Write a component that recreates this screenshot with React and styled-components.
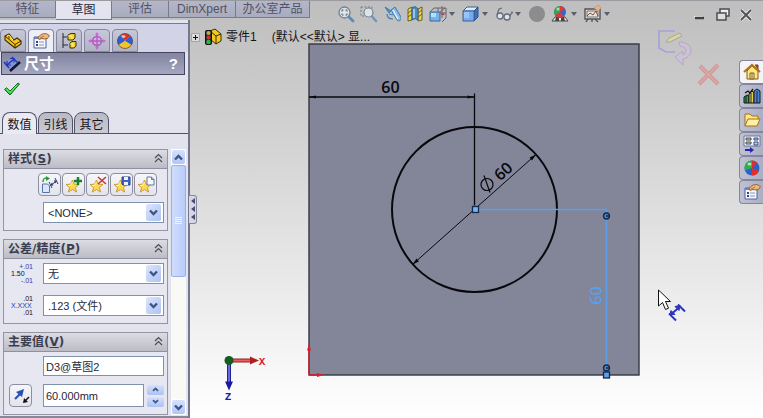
import React, { useState } from "react";
import styled, { createGlobalStyle } from "styled-components";

const GlobalStyle = createGlobalStyle`
  * {
    box-sizing: border-box;
  }

  body {
    margin: 0;
    font-family: "Liberation Sans", "Noto Sans CJK SC", sans-serif;
    font-size: 12px;
    color: #26283a;
  }

  button,
  input,
  select {
    font-family: inherit;
    font-size: inherit;
    color: inherit;
    margin: 0;
  }
`;

const Shell = styled.div`
  min-height: 100vh;
  display: flex;
  flex-direction: column;
  background: linear-gradient(#bebebe 0%, #cdcdcd 25%, #dedede 50%, #eeeeee 74%, #ffffff 100%);
`;

const Header = styled.header`
  height: 20px;
  display: flex;
  align-items: flex-start;
  border-top: 1px solid #9a9aa0;
  position: relative;
  z-index: 1;
`;

const CommandTabs = styled.nav`
  display: flex;
  align-items: flex-start;
`;

const CommandTab = styled.button`
  height: ${(props) => (props.$active ? "19px" : "17px")};
  padding: 0;
  width: ${(props) => props.$width};
  border: 1px solid #777a90;
  border-width: 0 1px 1px 0;
  background: ${(props) => (props.$active ? "#e3e4ef" : "linear-gradient(#b4b7c8, #a9acbf)")};
  color: ${(props) => (props.$active ? "#26283a" : "#505367")};
  line-height: 16px;
`;

const ViewTools = styled.div`
  display: flex;
  gap: 5px;
  padding-top: 4px;
  margin-left: 27px;
`;

const ToolButton = styled.button`
  display: flex;
  align-items: center;
  gap: 2px;
  width: ${(props) => (props.$menu ? "28px" : "18px")};
  height: 18px;
  padding: 0;
  border: 0;
  background: none;
`;

const WindowButtons = styled.div`
  display: flex;
  gap: 5px;
  padding: 5px 8px 0 0;
  margin-left: auto;
`;

const Body = styled.div`
  flex: 1;
  display: flex;
`;

const Panel = styled.aside`
  flex: 0 0 190px;
  display: flex;
  flex-direction: column;
  background: #e2e3ed;
  border-right: 2px solid #74778d;
  border-bottom: 3px solid #85889c;
`;

const ManagerTabs = styled.div`
  display: flex;
  gap: 2px;
  height: 29px;
  padding-top: 5px;
  margin-top: 3px;
  border-top: 1px solid #777a92;
  background: #d2d3e7;
`;

const ManagerTab = styled.button`
  display: flex;
  align-items: center;
  justify-content: center;
  width: 26px;
  padding: 0;
  border: 1px solid #8587a0;
  border-bottom-width: ${(props) => (props.$active ? "0" : "1px")};
  border-radius: 4px 4px 0 0;
  background: ${(props) => (props.$active ? "#eeeff6" : "linear-gradient(#c6c8d8, #b2b4c6)")};
`;

const TitleBar = styled.div`
  display: flex;
  align-items: center;
  gap: 3px;
  height: 23px;
  margin: 0 3px 0 1px;
  padding: 0 6px 0 1px;
  border: 1px solid #45475e;
  background: linear-gradient(#8284a0, #a5a7c0);
`;

const Title = styled.h1`
  flex: 1;
  margin: 0;
  color: #fff;
  font-size: 15px;
  line-height: 20px;
`;

const HelpButton = styled.button`
  padding: 0;
  border: 0;
  background: none;
  color: #fff;
  font-size: 15px;
  font-weight: bold;
`;

const ConfirmBar = styled.div`
  height: 37px;
  padding: 5px 3px;
`;

const PlainButton = styled.button`
  display: block;
  padding: 0;
  border: 0;
  background: none;
`;

const PageTabs = styled.div`
  display: flex;
  gap: 1px;
  height: 22px;
  padding-left: 2px;
  margin-bottom: 15px;
  border-bottom: 1px solid #50536a;
`;

const PageTab = styled.button`
  width: 35px;
  height: 22px;
  padding: 0;
  border: 1px solid #50536a;
  border-bottom-width: ${(props) => (props.$active ? "0" : "1px")};
  border-radius: 8px 8px 0 0;
  background: ${(props) => (props.$active ? "#e9eaf2" : "linear-gradient(#b9bac4, #c9cad3)")};
  color: #14151f;
`;

const ScrollArea = styled.div`
  flex: 1;
  display: flex;
  gap: 3px;
  padding: 0 2px 1px 3px;
`;

const Groups = styled.div`
  flex: 1;
  display: flex;
  flex-direction: column;
  gap: 8px;
`;

const Group = styled.section`
  border: 1px solid #9395a6;
  background: #e6e7f0;
`;

const GroupHeader = styled.div`
  display: flex;
  align-items: center;
  justify-content: space-between;
  height: 19px;
  padding: 0 4px;
  border-bottom: 1px solid #8f919f;
  background: linear-gradient(#dcdde3, #bbbcc5);
`;

const GroupTitle = styled.h2`
  margin: 0;
  font-family: "DejaVu Sans", "Noto Sans CJK SC", sans-serif;
  font-size: 12px;
  line-height: 18px;
  color: #3b3e50;
`;

const GroupBody = styled.div`
  display: flex;
  flex-direction: column;
  gap: ${(props) => props.$gap};
  padding: 4px 3px 7px 4px;
`;

const StyleButtons = styled.div`
  display: flex;
  gap: 1px;
  justify-content: flex-end;
  padding-right: 7px;
`;

const BoxButton = styled.button`
  display: flex;
  align-items: center;
  justify-content: center;
  width: 23px;
  height: 23px;
  padding: 0;
  border: 1px solid #8d8fa0;
  border-radius: 4px;
  background: linear-gradient(#f6f6fa, #e3e4ec);
`;

const Row = styled.div`
  display: grid;
  grid-template-columns: 35px 1fr;
  align-items: center;
`;

const Combo = styled.div`
  grid-column: 2;
  display: grid;
  grid-template-columns: 1fr 17px;
  align-items: center;
  height: 21px;
  border: 1px solid #7f92ab;
  background: #fff;
`;

const Select = styled.select`
  grid-area: 1 / 1 / 2 / 3;
  width: 100%;
  height: 19px;
  padding: 0 0 0 4px;
  border: 0;
  appearance: none;
  background: transparent;
  font-size: 11px;
`;

const ComboArrow = styled.span`
  grid-area: 1 / 2;
  display: flex;
  align-items: center;
  justify-content: center;
  width: 15px;
  height: 17px;
  border-radius: 2px;
  background: linear-gradient(135deg, #dbe5fd, #adc3f3);
  pointer-events: none;
`;

const ToleranceLabel = styled.label`
  display: grid;
  width: 22px;
  margin-left: 3px;
  font-size: 7px;
  line-height: 7px;
  color: ${(props) => (props.$blueSides ? "#1c3cae" : "#101018")};
`;

const LabelSide = styled.span`
  text-align: right;
`;

const LabelMain = styled.span`
  color: ${(props) => (props.$blue ? "#1c3cae" : "#101018")};
`;

const TextBox = styled.input`
  grid-column: 2;
  width: 100%;
  min-width: 0;
  height: ${(props) => props.$height || "20px"};
  padding: 0 2px;
  border: 1px solid #7f92ab;
  background: #fff;
  font-size: 11px;
`;

const ValueField = styled.div`
  display: flex;
  align-items: center;
  gap: 3px;
`;

const Spinner = styled.div`
  display: grid;
  gap: 2px;
`;

const SpinButton = styled.button`
  display: flex;
  align-items: center;
  justify-content: center;
  width: 17px;
  height: 10px;
  padding: 0;
  border: 0;
  border-radius: 2px;
  background: linear-gradient(#d5e1fd, #abc2f4);
`;

const SwapCell = styled.div`
  padding-left: 1px;
`;

const ScrollBar = styled.div`
  display: flex;
  flex-direction: column;
  width: 15px;
  background: #f9f9f6;
`;

const ScrollButton = styled.button`
  display: flex;
  align-items: center;
  justify-content: center;
  height: 16px;
  padding: 0;
  border: 1px solid #fff;
  border-radius: 3px;
  background: linear-gradient(#d5e1fd, #b1c6f6);
`;

const Thumb = styled.div`
  display: flex;
  align-items: center;
  justify-content: center;
  height: 42%;
  border: 1px solid #98b0e6;
  border-radius: 2px;
  background: linear-gradient(90deg, #cfdcfd, #b9cdfb);
`;

const Track = styled.div`
  flex: 1;
`;

const Viewport = styled.main`
  flex: 1;
  min-width: 0;
  position: relative;
`;

const Drawing = styled.svg`
  display: block;
  width: 100%;
  height: 100%;
`;

const DimensionText = styled.text`
  font-family: "Open Sans", sans-serif;
  font-size: 16px;
  font-weight: 600;
  text-anchor: middle;
`;

const AxisText = styled.text`
  font-family: "Liberation Mono", monospace;
  font-size: 11px;
  font-weight: bold;
  text-anchor: middle;
`;

const TreeNode = styled.div`
  position: absolute;
  top: 8px;
  left: 1px;
  display: flex;
  align-items: center;
  gap: 4px;
  color: #14151c;
  line-height: 18px;
  white-space: nowrap;
`;

const Configuration = styled.span`
  margin-left: 11px;
`;

const Grip = styled.button`
  position: absolute;
  top: 175px;
  left: -1px;
  width: 8px;
  height: 29px;
  padding: 0;
  border: 1px solid #85879f;
  border-left: 0;
  border-radius: 0 3px 3px 0;
  background: #d5d6e6;
`;

const ConfirmCorner = styled.div`
  position: absolute;
  top: 8px;
  right: 42px;
  display: flex;
  gap: 4px;
  align-items: flex-start;
`;

const CancelSlot = styled.div`
  padding-top: 35px;
`;

const TaskPane = styled.nav`
  position: absolute;
  top: 40px;
  right: 0;
  display: flex;
  flex-direction: column;
`;

const TaskTab = styled.button`
  display: flex;
  align-items: center;
  justify-content: center;
  width: 24px;
  height: 24px;
  padding: 0;
  border: 1px solid #83869c;
  border-right: 0;
  border-radius: 4px 0 0 4px;
  background: ${(props) => (props.$active ? "#f3f3f8" : "linear-gradient(90deg, #c0c2d2, #abaec3)")};
`;

function Icon({ size = 18, children }) {
  return (
    <svg width={size} height={size} viewBox="0 0 18 18" fill="none" aria-hidden="true">
      {children}
    </svg>
  );
}

function Caret() {
  return (
    <svg width="6" height="4" viewBox="0 0 6 4" aria-hidden="true">
      <path d="M0 0h6L3 4z" fill="#5c5d6b" />
    </svg>
  );
}

function Chevron({ up, small }) {
  return (
    <svg width={small ? 7 : 9} height={small ? 5 : 7} viewBox="0 0 9 7" aria-hidden="true">
      <path d={up ? "M1 5.5 4.5 2 8 5.5" : "M1 1.5 4.5 5 8 1.5"} fill="none" stroke="#3e5684" strokeWidth="2.4" />
    </svg>
  );
}

function CollapseIcon() {
  return (
    <svg width="9" height="10" viewBox="0 0 9 10" fill="none" stroke="#4b4d5c" strokeWidth="1.2" aria-hidden="true">
      <path d="M1 5 4.500 1.500 8 5M1 9 4.500 5.500 8 9" />
    </svg>
  );
}

function BallIcon() {
  return (
    <Icon>
      <circle cx="9" cy="9" r="7.500" fill="#2c60cf" />
      <path d="M9 9V1.500A7.500 7.500 0 0 0 2 11.500z" fill="#2fae47" />
      <path d="M9 9V1.500A7.500 7.500 0 0 1 14 3.500z" fill="#e02f28" />
      <path d="M9 9 16 12a7.500 7.500 0 0 1-7 4.500z" fill="#e02f28" />
      <ellipse cx="6.500" cy="5" rx="2" ry="1.500" fill="#fff" opacity=".65" />
    </Icon>
  );
}

function DisplayIcon() {
  return (
    <Icon>
      <path d="M9 9 2.500 13A7.500 7.500 0 0 1 5 2.700z" fill="#2c60cf" />
      <path d="M9 9 5 2.700A7.500 7.500 0 0 1 14.500 4z" fill="#dd2f28" />
      <path d="M9 9 14.500 4A7.500 7.500 0 0 1 15.500 13z" fill="#2c60cf" />
      <path d="M9 9l6.500 4a7.500 7.500 0 0 1-13 0z" fill="#f0c52a" />
      <circle cx="9" cy="9" r="7.500" stroke="#5a4a50" strokeWidth=".8" />
      <ellipse cx="7.500" cy="4.500" rx="2" ry="1.300" fill="#fff" opacity=".7" />
    </Icon>
  );
}

function PartIcon() {
  return (
    <Icon>
      <path d="m1 4 4-2 5 6 3-2 4 3v3l-6 4L1 8z" fill="#f5c518" stroke="#3d2d00" strokeWidth="1.100" />
      <path d="m1 4 10 8.500L17 9M11 12.500v3.500M5 2v4.500" stroke="#3d2d00" />
      <path d="m3 4 2-1 4 5" stroke="#fff19a" />
    </Icon>
  );
}

function PropertyIcon() {
  return (
    <Icon>
      <path d="M2 5h12v11H2z" fill="#f7f8ff" stroke="#5062a0" />
      <path d="M2 5h12v2H2z" fill="#6c83c5" />
      <path d="M4 9h2v2H4zm0 3h2v2H4z" fill="#35477f" />
      <path d="M7 10h5M7 13h5" stroke="#8993b4" />
      <path d="m6 5 4-3 4-.500 3.500 2-2 3L12 7l-2-.500-3 1z" fill="#f0b97a" stroke="#855325" strokeWidth=".8" />
      <path d="m8 6 4-2" stroke="#855325" strokeWidth=".7" />
    </Icon>
  );
}

function TreeIcon() {
  return (
    <Icon>
      <path d="M3 1v15M3 5h4M3 13h5" stroke="#25262f" />
      <path d="m8 3 3-1.500h4V6l-2 2H8z" fill="#f7d321" stroke="#3d3200" />
      <path d="m10 11 2-1.500h4V14l-2 2h-4z" fill="#f7d321" stroke="#3d3200" />
      <path d="M8 4h4v3M10 12h3v3" stroke="#fff9b5" strokeWidth=".8" />
    </Icon>
  );
}

function TargetIcon() {
  return (
    <Icon>
      <circle cx="9" cy="9" r="4.500" stroke="#ba54cc" strokeWidth="1.500" />
      <path d="M9 1v16M1 9h16" stroke="#ba54cc" strokeWidth="1.300" />
      <path d="m9 0 2 3H7zm0 18 2-3H7zM0 9l3-2v4zm18 0-3-2v4z" fill="#c96bd7" />
    </Icon>
  );
}

function DimensionIcon() {
  return (
    <Icon>
      <path d="m1 9 9-7 7 6-9 8z" fill="#8294d8" />
      <path d="m7 16 10-9" stroke="#11162e" strokeWidth="2.600" />
      <path d="m1 7 5 6M9 2l6 6M4 10l7-6" stroke="#2036b1" strokeWidth="1.400" />
      <path d="M4 6v4h4M7 3.500h4v4" stroke="#2036b1" strokeWidth="1.200" />
    </Icon>
  );
}

function CheckIcon() {
  return (
    <Icon>
      <path d="m1.500 9.500 2-1.700L7 11 15 3l1.500 1L7 15z" fill="#31c83a" stroke="#146d20" />
      <path d="m3.500 9 3.500 3.500L14 5" stroke="#9cf59a" strokeWidth=".8" />
    </Icon>
  );
}

function StarIcon({ children }) {
  return (
    <Icon>
      <path
        d="m7.500 4 1.800 4.200 4.700.3-3.600 3 1.200 4.500-4.100-2.500L3.400 16l1.200-4.500-3.600-3 4.700-.3z"
        fill="#ffd94c"
        stroke="#c9952a"
        strokeWidth=".9"
      />
      <path d="M7.300 6 6 9.300 3 9.500" stroke="#fff6b8" />
      {children}
    </Icon>
  );
}

function ApplyIcon() {
  return (
    <Icon>
      <path d="M1.500 8h5l2 2v6.500h-7z" fill="#d9e6fb" stroke="#5a73a8" />
      <path d="M2 6c0-4 2-4 4-4" stroke="#2f9940" strokeWidth="1.500" />
      <path d="M5 0v5l4-2.500z" fill="#2f9940" />
      <path d="m8 6 3 6m3-10 3 6M10 9l5-3.500" stroke="#2c3e74" />
      <path d="m9 9.500 2-3 1.500 3zM16 5l-3-1 1 3.500z" fill="#2c3e74" />
    </Icon>
  );
}

const styleActions = [
  { name: "apply", icon: <ApplyIcon /> },
  { name: "add", icon: <StarIcon><path d="M13 1v8M9 5h8" stroke="#16822a" strokeWidth="2.500" /></StarIcon> },
  { name: "delete", icon: <StarIcon><path d="m9 1 8 7m0-7L9 8" stroke="#c33a35" strokeWidth="1.600" /></StarIcon> },
  {
    name: "save",
    icon: (
      <StarIcon>
        <path d="M9 1h8v8h-7L9 8z" fill="#3f66c4" stroke="#274285" />
        <path d="M11 1h4v3h-4zM11 6h4v3h-4z" fill="#eef3ff" />
      </StarIcon>
    ),
  },
  {
    name: "load",
    icon: (
      <StarIcon>
        <path d="M10 1h4.500L17 3.500V9h-7z" fill="#f4f8ff" stroke="#667798" />
        <path d="M14.500 1v2.500H17" stroke="#667798" />
      </StarIcon>
    ),
  },
];

const managerTabs = [
  { name: "features", icon: <PartIcon /> },
  { name: "properties", icon: <PropertyIcon /> },
  { name: "configurations", icon: <TreeIcon /> },
  { name: "dimxpert", icon: <TargetIcon /> },
  { name: "display", icon: <DisplayIcon /> },
];

const commandTabs = [
  { label: "特征", width: "56px" },
  { label: "草图", width: "56px" },
  { label: "评估", width: "57px" },
  { label: "DimXpert", width: "67px" },
  { label: "办公室产品", width: "74px" },
];

const viewTools = [
  {
    name: "zoom to fit",
    icon: (
      <Icon>
        <circle cx="7.500" cy="7.500" r="5.500" fill="#dde4e8" stroke="#71808f" strokeWidth="1.300" />
        <path d="M5 6.500V5h1.500m2 0H10v1.500m0 2V10H8.500m-2 0H5V8.500" stroke="#535d6b" />
        <path d="m12 12 4 4" stroke="#5e88b8" strokeWidth="2.800" strokeLinecap="round" />
      </Icon>
    ),
  },
  {
    name: "zoom to area",
    icon: (
      <Icon>
        <path d="M1 2h11v9H1z" stroke="#777a84" strokeDasharray="2 1.500" />
        <circle cx="8.500" cy="7.500" r="4.500" fill="#dce4e9" stroke="#7b8490" strokeWidth="1.200" />
        <path d="m12 11.500 4 4.500" stroke="#7196bd" strokeWidth="2.600" strokeLinecap="round" />
      </Icon>
    ),
  },
  {
    name: "previous view",
    icon: (
      <Icon>
        <path d="m8 5 4-3 6 10c1 3-2 5-4 3z" fill="#86bce9" stroke="#4377ab" />
        <path d="m10 5 5 9" stroke="#e4f3ff" strokeWidth="1.500" />
        <path d="m2 2 4 6 2-2zM6 9l4 1" fill="#4a98d9" stroke="#3c7ab3" />
        <path d="M4 9c0 4 3 5 6 5" stroke="#4377ab" strokeWidth="1.200" />
      </Icon>
    ),
  },
  {
    name: "section view",
    icon: (
      <Icon>
        <path d="m2 4 4-2v13l-4 1zM12 4l4-2v13l-4 1z" fill="#f2d53c" stroke="#65602f" />
        <path d="m2 8 4-3m-4 7 4-3m6-1 4-3m-4 7 4-3" stroke="#65602f" />
        <path d="M6 3q3-3 6 1v11q-3-3-6 0z" fill="#508bc5" stroke="#36618c" />
        <path d="M8 4v9" stroke="#b4daf6" strokeWidth="1.500" />
      </Icon>
    ),
  },
  {
    name: "view orientation",
    menu: true,
    icon: (
      <Icon>
        <path d="m1 7 4-4h12v10l-4 4" stroke="#67606d" />
        <path d="M1 7h10v9H1z" fill="#76b3e8" stroke="#3e6797" />
        <path d="M2 8h5v4H2z" fill="#b7ddfa" />
        <path d="M9 3v4m4-6v12m-2-5h6M11 7l5-4" stroke="#765d6b" />
        <path d="m12 10 2-2 2 2z" fill="#a3433f" />
      </Icon>
    ),
  },
  {
    name: "display style",
    menu: true,
    icon: (
      <Icon>
        <path d="m1 6 4-4h11l-4 4z" fill="#dcecff" stroke="#3b5e93" />
        <path d="m12 6 4-4v10l-4 4z" fill="#3c72bd" stroke="#315285" />
        <path d="M1 6h11v10H1z" fill="#76acea" stroke="#3b5e93" />
        <path d="M2 7h5v6H2z" fill="#a7ceff" opacity=".7" />
      </Icon>
    ),
  },
  {
    name: "hide and show items",
    menu: true,
    icon: (
      <Icon>
        <circle cx="5" cy="11" r="3" fill="#dce5ed" stroke="#666a76" strokeWidth="1.300" />
        <circle cx="12" cy="12" r="3" fill="#dce5ed" stroke="#666a76" strokeWidth="1.300" />
        <path d="M2 10 4 4l3-1m8 8 2-4 1 1M8 11h1" stroke="#666a76" strokeWidth="1.200" />
      </Icon>
    ),
  },
  {
    name: "edit appearance",
    icon: (
      <Icon>
        <circle cx="9" cy="9" r="8" fill="#8c8c8e" />
      </Icon>
    ),
  },
  {
    name: "apply scene",
    menu: true,
    icon: (
      <Icon>
        <path d="m1 16 3-4h10l3 4z" fill="#f5f5f5" stroke="#444" />
        <path d="m5 12-1 4h4v-4zm5 0v4h4l-1-4z" fill="#454545" />
        <circle cx="9" cy="7" r="6" fill="#3267c8" />
        <path d="M9 7V1a6 6 0 0 0-5 9z" fill="#38a94b" />
        <path d="M9 7V1a6 6 0 0 1 5 3z" fill="#df3933" />
        <path d="m9 7 4 4.500A6 6 0 0 1 4 10z" fill="#df3933" />
        <circle cx="7" cy="4" r="1.500" fill="#fff" opacity=".6" />
      </Icon>
    ),
  },
  {
    name: "view settings",
    menu: true,
    icon: (
      <Icon>
        <path d="M1 4h15v10H1z" fill="#e9e3dc" stroke="#56505a" strokeWidth="1.400" />
        <path d="M3 6h11v6H3z" stroke="#777" />
        <path d="m3 11 3-3 3 2 3-4 2 5" stroke="#77504a" />
        <path d="m4 14-2 3m9-3 3 3M8 14v3" stroke="#56505a" strokeWidth="1.300" />
        <path d="m10 3 5-3 2 3-3 3z" fill="#e7b489" stroke="#bd885d" strokeWidth=".5" />
      </Icon>
    ),
  },
];

const windowButtons = [
  {
    name: "minimize",
    icon: (
      <>
        <path d="M3 10.500h9" stroke="#f2f2f2" />
        <path d="M4 12h9" stroke="#3e4046" strokeWidth="2.500" />
      </>
    ),
  },
  {
    name: "restore",
    icon: (
      <>
        <path d="M6 3h9v7H6z" fill="#eee" stroke="#4a4c52" strokeWidth="1.500" />
        <path d="M3 7h9v7H3z" fill="#ddd" stroke="#4a4c52" strokeWidth="1.500" />
      </>
    ),
  },
  {
    name: "close",
    icon: (
      <>
        <path d="m4 4 10 10m0-10L4 14" stroke="#eee" strokeWidth="3.500" />
        <path d="m4 4 10 10m0-10L4 14" stroke="#505258" strokeWidth="2" />
      </>
    ),
  },
];

const taskTabs = [
  {
    name: "resources",
    icon: (
      <Icon>
        <path d="M4 8v8h11V8L9 3z" fill="#ffe784" stroke="#815b15" />
        <path d="M12 2h3v5" fill="#a43c2b" stroke="#704222" />
        <path d="m1 9 8-7 8 7" stroke="#b37516" strokeWidth="2.200" />
        <path d="M7 10h4v6H7zM9 10v6" fill="#fff5bd" stroke="#805c1e" />
      </Icon>
    ),
  },
  {
    name: "design library",
    icon: (
      <Icon>
        <path d="m1 10 3-2 2 1v7H1z" fill="#359c54" stroke="#13171c" />
        <path d="m6 7 3-3 2 2v10H6z" fill="#e8cf43" stroke="#13171c" />
        <path d="m11 4 3-2 3 2v12h-6z" fill="#4c87d6" stroke="#13171c" />
        <path d="M3 9v7m5-10v10m6-12v12" stroke="#13171c" strokeWidth=".9" />
        <path d="m2 6 3-2 2 2 3-4" stroke="#13171c" strokeWidth="1.300" />
      </Icon>
    ),
  },
  {
    name: "file explorer",
    icon: (
      <Icon>
        <path d="M2 15V3h5l2 2h6v3" fill="#ffe58b" stroke="#a37316" />
        <path d="m2 15 3-7h12l-3 7z" fill="#fff0a2" stroke="#a37316" />
      </Icon>
    ),
  },
  {
    name: "view palette",
    icon: (
      <Icon>
        <path d="M1 1h16v10H1z" fill="#f5f6ff" stroke="#6d7792" />
        <path d="M3 3h5v2H3zm0 4h5v2H3z" fill="#f5d13d" stroke="#3a4b78" />
        <path d="M11 3h4v2h-4zm0 4h4v3h-4z" fill="#b7cffa" stroke="#3a4b78" />
        <path d="M2 15h7" stroke="#2424b9" strokeWidth="2" />
        <path d="m7 12 4 3-4 3z" fill="#2424b9" />
      </Icon>
    ),
  },
  { name: "appearances", icon: <BallIcon /> },
  { name: "custom properties", icon: <PropertyIcon /> },
];

function Collapsible({ title, hotkey, gap, children }) {
  const [open, setOpen] = useState(true);

  return (
    <Group>
      <GroupHeader>
        <GroupTitle>
          {title}(<u>{hotkey}</u>)
        </GroupTitle>
        <PlainButton aria-label={title} aria-expanded={open} onClick={() => setOpen(!open)}>
          <CollapseIcon />
        </PlainButton>
      </GroupHeader>
      {open && <GroupBody $gap={gap}>{children}</GroupBody>}
    </Group>
  );
}

function ComboBox({ id, label, options }) {
  return (
    <Combo>
      <Select id={id} aria-label={label}>
        {options.map((option) => (
          <option key={option}>{option}</option>
        ))}
      </Select>
      <ComboArrow>
        <Chevron />
      </ComboArrow>
    </Combo>
  );
}

function PropertyPanel() {
  const [page, setPage] = useState("数值");
  const [dimName, setDimName] = useState("D3@草图2");
  const [value, setValue] = useState("60.000mm");

  const step = (amount) => {
    setValue((prev) => `${(parseFloat(prev) + amount).toFixed(3)}mm`);
  };

  return (
    <Panel>
      <ManagerTabs>
        {managerTabs.map((tab) => (
          <ManagerTab key={tab.name} aria-label={tab.name} $active={tab.name === "properties"}>
            {tab.icon}
          </ManagerTab>
        ))}
      </ManagerTabs>
      <TitleBar>
        <DimensionIcon />
        <Title>尺寸</Title>
        <HelpButton>?</HelpButton>
      </TitleBar>
      <ConfirmBar>
        <PlainButton aria-label="ok">
          <CheckIcon />
        </PlainButton>
      </ConfirmBar>
      <PageTabs>
        {["数值", "引线", "其它"].map((name) => (
          <PageTab key={name} $active={page === name} onClick={() => setPage(name)}>
            {name}
          </PageTab>
        ))}
      </PageTabs>

      <ScrollArea>
        <Groups>
          <Collapsible title="样式" hotkey="S" gap="6px">
            <StyleButtons>
              {styleActions.map((action) => (
                <BoxButton key={action.name} aria-label={action.name}>
                  {action.icon}
                </BoxButton>
              ))}
            </StyleButtons>
            <Row>
              <ComboBox label="样式" options={["<NONE>"]} />
            </Row>
          </Collapsible>

          <Collapsible title="公差/精度" hotkey="P" gap="11px">
            <Row>
              <ToleranceLabel htmlFor="tolerance" $blueSides>
                <LabelSide>+.01</LabelSide>
                <LabelMain>1.50</LabelMain>
                <LabelSide>-.01</LabelSide>
              </ToleranceLabel>
              <ComboBox id="tolerance" options={["无"]} />
            </Row>
            <Row>
              <ToleranceLabel htmlFor="precision">
                <LabelSide>.01</LabelSide>
                <LabelMain $blue>X.XXX</LabelMain>
                <LabelSide>.01</LabelSide>
              </ToleranceLabel>
              <ComboBox id="precision" options={[".123 (文件)"]} />
            </Row>
          </Collapsible>

          <Collapsible title="主要值" hotkey="V" gap="8px">
            <Row>
              <TextBox aria-label="名称" value={dimName} onChange={(e) => setDimName(e.target.value)} />
            </Row>
            <Row>
              <SwapCell>
                <BoxButton aria-label="reverse">
                  <Icon>
                    <path d="m3 12 5-5" stroke="#2851b8" strokeWidth="2.200" />
                    <path d="m4 5 8-3-2 8z" fill="#2851b8" />
                    <path d="m17 10-4 4" stroke="#111" strokeWidth="1.400" />
                    <path d="m12 11-1 5 5-1z" fill="#111" />
                  </Icon>
                </BoxButton>
              </SwapCell>
              <ValueField>
                <TextBox
                  aria-label="主要值"
                  $height="23px"
                  value={value}
                  onChange={(e) => setValue(e.target.value)}
                />
                <Spinner>
                  <SpinButton aria-label="increase" onClick={() => step(10)}>
                    <Chevron up small />
                  </SpinButton>
                  <SpinButton aria-label="decrease" onClick={() => step(-10)}>
                    <Chevron small />
                  </SpinButton>
                </Spinner>
              </ValueField>
            </Row>
          </Collapsible>
        </Groups>

        <ScrollBar>
          <ScrollButton aria-label="scroll up">
            <Chevron up />
          </ScrollButton>
          <Thumb>
            <svg width="7" height="8" viewBox="0 0 7 8" stroke="#eef3ff" aria-hidden="true">
              <path d="M0 .5h7M0 2.500h7M0 4.500h7M0 6.500h7" />
            </svg>
          </Thumb>
          <Track />
          <ScrollButton aria-label="scroll down">
            <Chevron />
          </ScrollButton>
        </ScrollBar>
      </ScrollArea>
    </Panel>
  );
}

function SketchDrawing() {
  return (
    <Drawing viewBox="190 20 573 398" role="img" aria-label="草图2">
      <rect x="309" y="43.500" width="330" height="331" fill="#838599" stroke="#34363f" strokeWidth="1.400" />

      {/* horizontal dimension */}
      <g stroke="#08080c" fill="#08080c">
        <path d="M309 96.500h166M474.500 93v112" strokeWidth="1.300" />
        <path d="m309 96.500 7-1.500v3zm165.500 0-7-1.500v3z" stroke="none" />
      </g>
      <DimensionText x="390.500" y="92" fill="#08080c">60</DimensionText>

      {/* circle and its diameter */}
      <circle cx="474.500" cy="209" r="82.500" fill="none" stroke="#08080c" strokeWidth="2" />
      <path d="M412.500 264 536 154" stroke="#08080c" />
      <path d="m412.500 264 4-6 2.500 3zM536 154l-6.500 3 2.500 3z" fill="#08080c" />
      <g fill="none" stroke="#08080c" strokeWidth="1.200">
        <circle cx="487" cy="184" r="6" />
        <path d="m484 175 6 17" />
      </g>
      <DimensionText transform="translate(507 175) rotate(-42)" fill="#08080c">60</DimensionText>

      {/* selected vertical dimension */}
      <g stroke="#5b9ee9" fill="none">
        <path d="M479 209h128M606.500 209v164" strokeWidth="1.600" />
      </g>
      <DimensionText transform="translate(602 295) rotate(-90)" fill="#5b9ee9">60</DimensionText>
      <g stroke="#14294b" strokeWidth="1.300">
        <circle cx="606.500" cy="215.500" r="3" fill="#4c83c3" />
        <circle cx="606.500" cy="367.500" r="3" fill="#4c83c3" />
        <rect x="472.500" y="206" width="6" height="6" fill="#79b4ee" />
        <rect x="603.500" y="371.500" width="6" height="6" fill="#5b9ee9" />
        <path d="M606 215.500h3M606 367.500h3" />
      </g>

      {/* sketch origin */}
      <path d="M309 374.500V346M309 374.500h12" stroke="#e01b2d" strokeWidth="1.300" fill="none" />
      <path d="m309 343 2 7h-4zM324 374.500l-7-2v4z" fill="#e01b2d" />

      {/* view triad */}
      <path d="M229 360h24" stroke="#8c2326" strokeWidth="4" />
      <path d="M229 360h24" stroke="#ee5c5c" strokeWidth="2" />
      <path d="m259 360-9-4v8z" fill="#b01e22" />
      <path d="M229 360v24" stroke="#23238f" strokeWidth="4" />
      <path d="M229 360v24" stroke="#6868e6" strokeWidth="2" />
      <path d="m229 390-4-9h8z" fill="#1a1aa0" />
      <circle cx="229" cy="360" r="4.500" fill="#145c20" />
      <AxisText x="262" y="364" fill="#d81f2c">X</AxisText>
      <AxisText x="228" y="399" fill="#1c1ca8">Z</AxisText>

      {/* smart dimension pointer */}
      <path d="M658.500 289.500v16l4-3.500 3 7 3-1.300-3-6.700h5z" fill="#fff" stroke="#111" />
      <g stroke="#2b36bd" fill="none" strokeWidth="2">
        <path d="m669 313 7 7M678 304l7 7M672 313l7-6" />
        <path d="m670 314 1-4 4 4zM680 305l-1 5-4-4z" fill="#2b36bd" strokeWidth="1" />
      </g>
    </Drawing>
  );
}

function App() {
  const [command, setCommand] = useState("草图");
  const [pane, setPane] = useState("resources");

  return (
    <>
      <GlobalStyle />
      <Shell>
        <Header>
          <CommandTabs>
            {commandTabs.map((tab) => (
              <CommandTab
                key={tab.label}
                $width={tab.width}
                $active={command === tab.label}
                onClick={() => setCommand(tab.label)}
              >
                {tab.label}
              </CommandTab>
            ))}
          </CommandTabs>
          <ViewTools>
            {viewTools.map((tool) => (
              <ToolButton key={tool.name} aria-label={tool.name} $menu={tool.menu}>
                {tool.icon}
                {tool.menu && <Caret />}
              </ToolButton>
            ))}
          </ViewTools>
          <WindowButtons>
            {windowButtons.map((button) => (
              <ToolButton key={button.name} aria-label={button.name}>
                <Icon>{button.icon}</Icon>
              </ToolButton>
            ))}
          </WindowButtons>
        </Header>

        <Body>
          <PropertyPanel />
          <Viewport>
            <SketchDrawing />
            <TreeNode>
              <svg width="9" height="9" viewBox="0 0 9 9" aria-hidden="true">
                <path d="M.5.5h8v8h-8z" fill="#dcdcdc" stroke="#a5a5a5" />
                <path d="M2 4.500h5M4.500 2v5" stroke="#111" />
              </svg>
              <Icon>
                <path d="m6 3 5-2 6 5v7l-5 3-6-5z" fill="#f4c91c" stroke="#3d2d00" />
                <path d="m6 3 6 5 5-2M12 8v8" stroke="#3d2d00" />
                <rect x="1.500" y="2.500" width="6" height="14" rx="1" fill="#2b2b2b" stroke="#111" />
                <circle cx="4.500" cy="5" r="2" fill="#bbb052" />
                <circle cx="4.500" cy="9.500" r="2" fill="#df2a21" />
                <circle cx="4.500" cy="14" r="2.200" fill="#24ba3e" />
              </Icon>
              <span>零件1</span>
              <Configuration>{"(默认<<默认> 显..."}</Configuration>
            </TreeNode>
            <Grip aria-label="collapse panel">
              <svg width="6" height="25" viewBox="0 0 6 25" aria-hidden="true">
                <path d="m1 5 4-3v6zm0 8 4-3v6zm0 8 4-3v6z" fill="#4b4d73" />
              </svg>
            </Grip>
            <ConfirmCorner>
              <PlainButton aria-label="exit sketch">
                <svg width="36" height="40" viewBox="0 0 36 40" fill="none" aria-hidden="true">
                  <path d="M18 3H2v17l7 4h9" stroke="#a3a2d8" strokeWidth="1.600" />
                  <path d="m9 14 3-4 11-5 2 3-12 6z" fill="#dad6a0" stroke="#a8a696" />
                  <path
                    d="M22 14c8 0 12 4 12 9 0 4-4 7-8 8v6l-8-8 8-6v4c5-3 4-8-3-9z"
                    fill="#cdc2d4"
                    stroke="#b3a6cb"
                  />
                </svg>
              </PlainButton>
              <CancelSlot>
                <PlainButton aria-label="cancel sketch">
                  <svg width="24" height="24" viewBox="0 0 24 24" aria-hidden="true">
                    <path d="m3 3 18 18M21 2 2 21" stroke="#cf9696" strokeWidth="4" />
                    <path d="m3 3 18 18M21 2 2 21" stroke="#dca6a6" strokeWidth="2" />
                  </svg>
                </PlainButton>
              </CancelSlot>
            </ConfirmCorner>
            <TaskPane>
              {taskTabs.map((tab) => (
                <TaskTab
                  key={tab.name}
                  aria-label={tab.name}
                  $active={pane === tab.name}
                  onClick={() => setPane(tab.name)}
                >
                  {tab.icon}
                </TaskTab>
              ))}
            </TaskPane>
          </Viewport>
        </Body>
      </Shell>
    </>
  );
}

export default App;
